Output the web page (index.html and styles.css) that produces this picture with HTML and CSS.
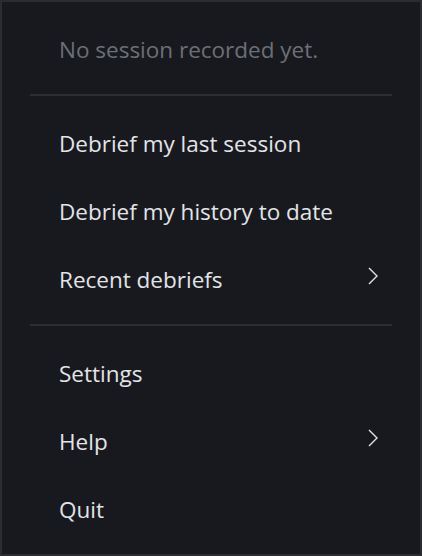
FILE: index.html
```html
<!DOCTYPE html>
<html lang="en">
<head>
<meta charset="utf-8">
<link rel="stylesheet" href="styles.css">
</head>
<body>
<div class="menu">
  <div class="item status">No session recorded yet.</div>
  <div class="sep"></div>
  <div class="item">Debrief my last session</div>
  <div class="item">Debrief my history to date</div>
  <div class="item sub">Recent debriefs
    <svg class="chev" width="10" height="18" viewBox="0 0 10 18"><polyline points="1,1 9,9 1,17" fill="none" stroke="#e2e4e8" stroke-width="1.4"/></svg>
  </div>
  <div class="sep"></div>
  <div class="item">Settings</div>
  <div class="item sub">Help
    <svg class="chev" width="10" height="18" viewBox="0 0 10 18"><polyline points="1,1 9,9 1,17" fill="none" stroke="#e2e4e8" stroke-width="1.4"/></svg>
  </div>
  <div class="item">Quit</div>
</div>
</body>
</html>
```
FILE: styles.css
```css
html,body{margin:0;padding:0;background:#18191e}
.menu{
  box-sizing:border-box;
  width:422px;
  height:556px;
  border:2px solid #2b2c31;
  background:#18191e;
  padding:12px 0;
  font-family:"Open Sans","Noto Sans",sans-serif;
  font-size:22.5px;
  color:#e2e4e8;
}
.item{
  box-sizing:border-box;
  height:68px;
  line-height:normal;
  padding:2px 42px 0 57px;
  display:flex;
  align-items:center;
  justify-content:space-between;
  white-space:nowrap;
}
.status{color:#6c6f76}
.sep{
  height:2px;
  background:#2d2e34;
  margin:12px 28px;
}
.chev{display:block;margin-bottom:6px}
```
